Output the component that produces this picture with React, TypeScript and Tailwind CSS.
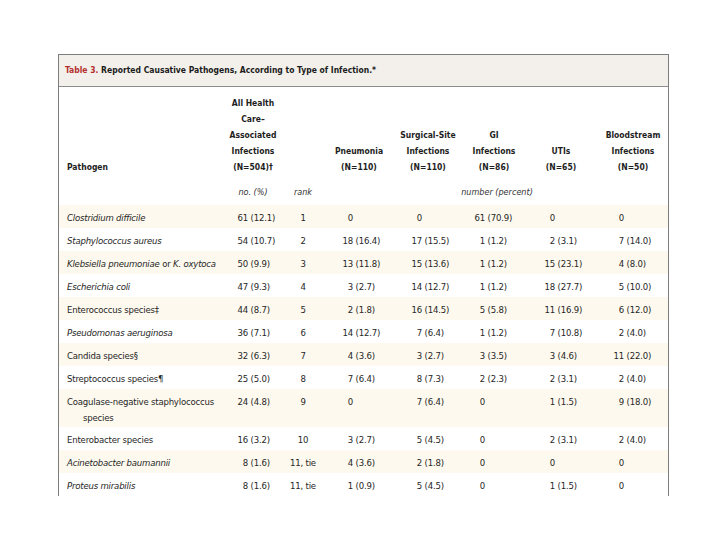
import React from "react";

type Cell = [string, string?];

type Row = {
  name: React.ReactNode;
  all: Cell;
  rank: string;
  vals: Cell[];
  tall?: boolean;
};

const GRID = "grid grid-cols-[167px_54px_46px_66px_72px_60px_74px_70px]";

// number box per column: left padding + width, so the units digits line up
const numBox = [
  { pad: "pl-[11px]", w: "w-[11px]" },
  { pad: "pl-[16px]", w: "w-[11px]" },
  { pad: "pl-[19px]", w: "w-[11px]" },
  { pad: "pl-[10px]", w: "w-[11px]" },
  { pad: "pl-[20px]", w: "w-[11px]" },
  { pad: "pl-[15px]", w: "w-[11px]" },
];

const rows: Row[] = [
  { name: <i>Clostridium difficile</i>, all: ["61", "12.1"], rank: "1", vals: [["0"], ["0"], ["61", "70.9"], ["0"], ["0"]] },
  { name: <i>Staphylococcus aureus</i>, all: ["54", "10.7"], rank: "2", vals: [["18", "16.4"], ["17", "15.5"], ["1", "1.2"], ["2", "3.1"], ["7", "14.0"]] },
  {
    name: (
      <>
        <i>Klebsiella pneumoniae</i> or <i>K. oxytoca</i>
      </>
    ),
    all: ["50", "9.9"],
    rank: "3",
    vals: [["13", "11.8"], ["15", "13.6"], ["1", "1.2"], ["15", "23.1"], ["4", "8.0"]],
  },
  { name: <i>Escherichia coli</i>, all: ["47", "9.3"], rank: "4", vals: [["3", "2.7"], ["14", "12.7"], ["1", "1.2"], ["18", "27.7"], ["5", "10.0"]] },
  { name: "Enterococcus species‡", all: ["44", "8.7"], rank: "5", vals: [["2", "1.8"], ["16", "14.5"], ["5", "5.8"], ["11", "16.9"], ["6", "12.0"]] },
  { name: <i>Pseudomonas aeruginosa</i>, all: ["36", "7.1"], rank: "6", vals: [["14", "12.7"], ["7", "6.4"], ["1", "1.2"], ["7", "10.8"], ["2", "4.0"]] },
  { name: "Candida species§", all: ["32", "6.3"], rank: "7", vals: [["4", "3.6"], ["3", "2.7"], ["3", "3.5"], ["3", "4.6"], ["11", "22.0"]] },
  { name: "Streptococcus species¶", all: ["25", "5.0"], rank: "8", vals: [["7", "6.4"], ["8", "7.3"], ["2", "2.3"], ["2", "3.1"], ["2", "4.0"]] },
  {
    name: (
      <>
        Coagulase-negative staphylococcus
        <br />
        species
      </>
    ),
    all: ["24", "4.8"],
    rank: "9",
    vals: [["0"], ["7", "6.4"], ["0"], ["1", "1.5"], ["9", "18.0"]],
    tall: true,
  },
  { name: "Enterobacter species", all: ["16", "3.2"], rank: "10", vals: [["3", "2.7"], ["5", "4.5"], ["0"], ["2", "3.1"], ["2", "4.0"]] },
  { name: <i>Acinetobacter baumannii</i>, all: ["8", "1.6"], rank: "11, tie", vals: [["4", "3.6"], ["2", "1.8"], ["0"], ["0"], ["0"]] },
  { name: <i>Proteus mirabilis</i>, all: ["8", "1.6"], rank: "11, tie", vals: [["1", "0.9"], ["5", "4.5"], ["0"], ["1", "1.5"], ["0"]] },
];

function Value({ cell, col }: { cell: Cell; col: number }) {
  const box = numBox[col];
  return (
    <div className={`${box.pad} whitespace-nowrap`}>
      <span className={`inline-block ${box.w} text-right`}>{cell[0]}</span>
      {cell[1] && <span> ({cell[1]})</span>}
    </div>
  );
}

export default function App() {
  return (
    <div className="w-[720px] h-[540px] bg-white pt-[54px] pl-[58px] font-['DejaVu_Sans_Condensed','DejaVu_Sans',sans-serif] text-[#262626]">
      <div className="w-[611px] border-x border-t border-[#7d7d7d]">
        {/* title band */}
        <div className="h-[32px] bg-[#f3f0eb] border-b border-[#8c8c8c] pl-[6px] flex items-center text-[8.5px] font-bold text-[#1c1c1c]">
          <span className="text-[#b3302e]">Table 3.</span>
          <span>&nbsp;Reported Causative Pathogens, According to Type of Infection.*</span>
        </div>

        {/* column headings */}
        <div className="pt-[8px] pb-[4px] text-[9px] leading-[16px] text-[#1e1e1e]">
          <div className={`${GRID} items-end text-center font-bold text-[8.5px]`}>
            <div className="text-left pl-[8px]">Pathogen</div>
            <div>
              All Health
              <br />
              Care–
              <br />
              Associated
              <br />
              Infections
              <br />
              (N=504)†
            </div>
            <div />
            <div>
              Pneumonia
              <br />
              (N=110)
            </div>
            <div>
              Surgical-Site
              <br />
              Infections
              <br />
              (N=110)
            </div>
            <div>
              GI
              <br />
              Infections
              <br />
              (N=86)
            </div>
            <div>
              UTIs
              <br />
              (N=65)
            </div>
            <div>
              Bloodstream
              <br />
              Infections
              <br />
              (N=50)
            </div>
          </div>
          <div className={`${GRID} mt-[8px] h-[18px] items-center text-center italic text-[#333]`}>
            <div />
            <div>no. (%)</div>
            <div>rank</div>
            <div className="col-span-5">number (percent)</div>
          </div>
        </div>

        {/* body */}
        <div className="text-[9.5px] tracking-[-0.2px] leading-[16px]">
          {rows.map((r, i) => (
            <div
              key={i}
              className={`${GRID} ${r.tall ? "h-[38px]" : "h-[23px]"} pt-[5px] ${i % 2 === 0 ? "bg-[#fdf9ee]" : "bg-white"}`}
            >
              <div className="pl-[24px] indent-[-16px] whitespace-nowrap">{r.name}</div>
              <Value cell={r.all} col={0} />
              <div className="text-center">{r.rank}</div>
              {r.vals.map((v, j) => (
                <Value key={j} cell={v} col={j + 1} />
              ))}
            </div>
          ))}
        </div>
      </div>
    </div>
  );
}
